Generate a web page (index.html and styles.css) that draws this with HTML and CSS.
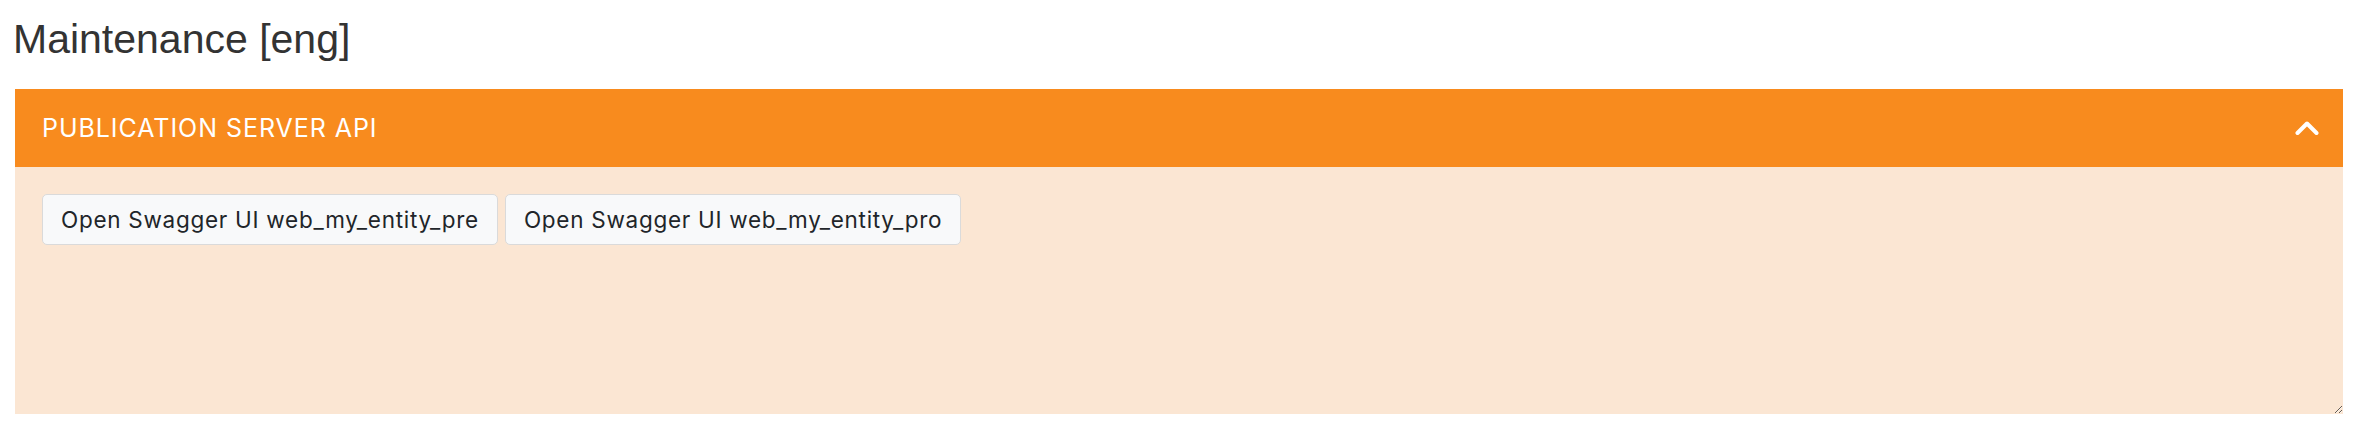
FILE: index.html
```html
<!DOCTYPE html>
<html>
<head>
<meta charset="utf-8">
<link rel="stylesheet" href="styles.css">
</head>
<body>
<div class="page">
  <h3 class="title">Maintenance [eng]</h3>
  <div class="panel">
    <div class="panel-header">
      <span class="panel-title">PUBLICATION SERVER API</span>
      <svg class="chevron" width="24" height="16" viewBox="0 0 24 16">
        <path d="M2.5 13 L12 3.5 L21.5 13" fill="none" stroke="#fff" stroke-width="4" stroke-linecap="round" stroke-linejoin="round"/>
      </svg>
    </div>
    <div class="panel-body">
      <button class="btn">Open Swagger UI web_my_entity_pre</button>
      <button class="btn">Open Swagger UI web_my_entity_pro</button>
    </div>
  </div>
</div>
</body>
</html>
```
FILE: styles.css
```css
html, body {
  margin: 0;
  padding: 0;
  background: #fff;
}
.page {
  padding: 14.5px 21px 0 15px;
  font-family: Inter, "Liberation Sans", sans-serif;
}
.title {
  margin: 0 0 25.3px -2px;
  font-family: "Liberation Sans", Arial, sans-serif;
  font-size: 41px;
  font-weight: 400;
  line-height: 1.2;
  color: #333333;
}
.panel {
  display: flex;
  flex-direction: column;
}
.panel-header {
  display: flex;
  align-items: center;
  justify-content: space-between;
  height: 78px;
  padding: 0 24px 0 27px;
  background: #f88b1e;
  color: #fff;
}
.panel-title {
  font-size: 25px;
  line-height: 36px;
  letter-spacing: 0.95px;
}
.chevron {
  display: block;
}
.panel-body {
  display: flex;
  align-items: flex-start;
  gap: 7px;
  height: 220px;
  padding: 27px 27px 0 27px;
  background: #fbe6d3;
  overflow: auto;
  resize: vertical;
}
.btn {
  font-family: Inter, "Liberation Sans", sans-serif;
  font-size: 22.5px;
  line-height: 31px;
  letter-spacing: 0.72px;
  padding: 9px 18px;
  color: #212529;
  background: #f8f9fa;
  border: 1.5px solid #dadada;
  border-radius: 5px;
  white-space: nowrap;
}
```
